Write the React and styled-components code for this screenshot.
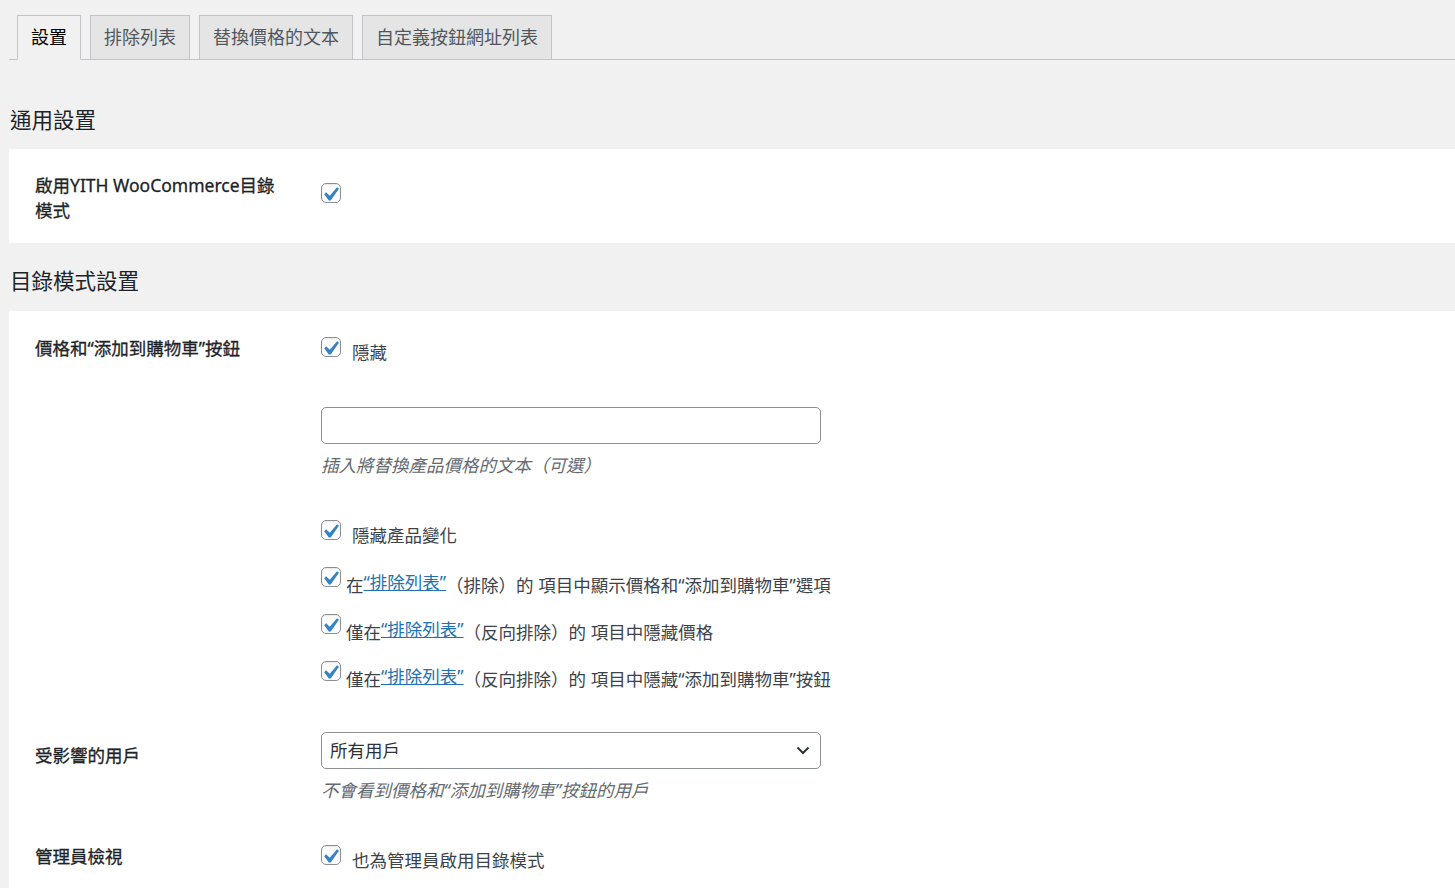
import styled, { createGlobalStyle } from "styled-components";

const GlobalStyle = createGlobalStyle`
  body {
    margin: 0;
    background: #f1f1f1;
    color: #3c434a;
    font-family: "Noto Sans", "Noto Sans CJK TC", sans-serif;
    font-size: 17.5px;
    line-height: 24.5px;
    text-spacing-trim: space-all;
  }
`;

const Page = styled.div`
  padding: 15px 0 40px 9px;
`;

const TabBar = styled.nav`
  display: flex;
  align-items: flex-end;
  gap: 9px;
  padding-left: 8px;
  border-bottom: 1px solid #c3c4c7;
`;

const Tab = styled.a`
  display: block;
  padding: 6px 13px 7px;
  margin-bottom: -1px;
  border: 1px solid #c3c4c7;
  background: ${(p) => (p.$active ? "#f1f1f1" : "#e5e5e5")};
  border-bottom-color: ${(p) => (p.$active ? "#f1f1f1" : "#c3c4c7")};
  color: ${(p) => (p.$active ? "#000" : "#50575e")};
  font-size: 18px;
  line-height: 30px;
  text-decoration: none;
  white-space: nowrap;
`;

const Heading = styled.h2`
  margin: ${(p) => p.$top}px 0 ${(p) => p.$bottom}px 1px;
  font-size: 21.5px;
  line-height: 30px;
  font-weight: 400;
  color: #1d2327;
`;

const Panel = styled.section`
  background: #fff;
  padding: 0 26px;
`;

const Row = styled.div`
  display: grid;
  grid-template-columns: 286px 1fr;
  padding: ${(p) => p.$pt}px 0 ${(p) => p.$pb}px;
`;

const Label = styled.div`
  width: 250px;
  margin-top: ${(p) => p.$mt || 0}px;
  color: #1d2327;
  font-weight: 400;
  -webkit-text-stroke: 0.3px #1d2327;
`;

const Field = styled.div`
  display: flex;
  flex-direction: column;
  align-items: flex-start;
  padding-top: ${(p) => p.$mt || 0}px;
`;

const CheckLine = styled.label`
  display: flex;
  align-items: flex-start;
  height: ${(p) => p.$h || 28.5}px;
`;

const CheckText = styled.span`
  padding-top: 4px;
  margin-left: ${(p) => (p.$spaced ? 11 : 5)}px;
  white-space: nowrap;
`;

const Box = styled.span`
  flex: none;
  display: block;
  width: 20px;
  height: 20px;
  margin-top: 1px;
  box-sizing: border-box;
  border: 1px solid #8c8f94;
  border-radius: 5px;
  background: #fff;
  box-shadow: inset 0 1px 2px rgba(0, 0, 0, 0.1);

  svg {
    display: block;
  }
`;

const Link = styled.a`
  color: #2271b1;
  text-decoration: underline;
  vertical-align: 3px;
`;

const TextInput = styled.input`
  width: 500px;
  height: 37px;
  margin-top: ${(p) => p.$mt || 0}px;
  box-sizing: border-box;
  border: 1px solid #8c8f94;
  border-radius: 5px;
  background: #fff;
`;

const Select = styled.div`
  display: flex;
  align-items: center;
  justify-content: space-between;
  width: 500px;
  height: 37px;
  box-sizing: border-box;
  padding: 0 10px 0 8px;
  border: 1px solid #8c8f94;
  border-radius: 5px;
  background: #fff;
  color: #2c3338;
  font-size: 17.5px;
`;

const Desc = styled.p`
  margin: 9px 0 0;
  color: #646970;
  font-style: italic;
`;

const Options = styled.div`
  display: flex;
  flex-direction: column;
  margin-top: 41px;
`;

const Check = () => (
  <Box>
    <svg width="18" height="18" viewBox="0 0 18 18">
      <path
        transform="translate(-6 -3.6) scale(1.42)"
        d="M14.83 4.89l1.34.94-5.81 8.38H9.02L5.78 9.67l1.34-1.25 2.57 2.4z"
        fill="#3582c4"
      />
    </svg>
  </Box>
);

const Chevron = () => (
  <svg width="14" height="9" viewBox="0 0 14 9">
    <path d="M1.5 1.5 7 7l5.5-5.5" fill="none" stroke="#2c3338" strokeWidth="2" />
  </svg>
);

const Exclusion = () => <Link href="#">“排除列表”</Link>;

const App = () => {
  return (
    <Page>
      <GlobalStyle />
      <TabBar>
        <Tab $active href="#">設置</Tab>
        <Tab href="#">排除列表</Tab>
        <Tab href="#">替換價格的文本</Tab>
        <Tab href="#">自定義按鈕網址列表</Tab>
      </TabBar>

      <Heading $top={45} $bottom={14}>通用設置</Heading>
      <Panel>
        <Row $pt={24} $pb={21}>
          <Label>啟用YITH WooCommerce目錄模式</Label>
          <Field $mt={9}>
            <Check />
          </Field>
        </Row>
      </Panel>

      <Heading $top={23} $bottom={15}>目錄模式設置</Heading>
      <Panel>
        <Row $pt={25} $pb={20}>
          <Label>價格和“添加到購物車”按鈕</Label>
          <Field>
            <CheckLine>
              <Check />
              <CheckText $spaced>隱藏</CheckText>
            </CheckLine>
            <TextInput type="text" $mt={42.5} />
            <Desc>插入將替換產品價格的文本（可選）</Desc>
            <Options>
              <CheckLine $h={47}>
                <Check />
                <CheckText $spaced>隱藏產品變化</CheckText>
              </CheckLine>
              <CheckLine $h={47}>
                <Check />
                <CheckText>
                  在<Exclusion />（排除）的 項目中顯示價格和“添加到購物車”選項
                </CheckText>
              </CheckLine>
              <CheckLine $h={47}>
                <Check />
                <CheckText>
                  僅在<Exclusion />（反向排除）的 項目中隱藏價格
                </CheckText>
              </CheckLine>
              <CheckLine>
                <Check />
                <CheckText>
                  僅在<Exclusion />（反向排除）的 項目中隱藏“添加到購物車”按鈕
                </CheckText>
              </CheckLine>
            </Options>
          </Field>
        </Row>

        <Row $pt={23.5} $pb={20}>
          <Label $mt={11.75}>受影響的用戶</Label>
          <Field>
            <Select>
              <span>所有用戶</span>
              <Chevron />
            </Select>
            <Desc>不會看到價格和“添加到購物車”按鈕的用戶</Desc>
          </Field>
        </Row>

        <Row $pt={21.5} $pb={40}>
          <Label>管理員檢視</Label>
          <Field>
            <CheckLine>
              <Check />
              <CheckText $spaced>也為管理員啟用目錄模式</CheckText>
            </CheckLine>
          </Field>
        </Row>
      </Panel>
    </Page>
  );
};

export default App;
